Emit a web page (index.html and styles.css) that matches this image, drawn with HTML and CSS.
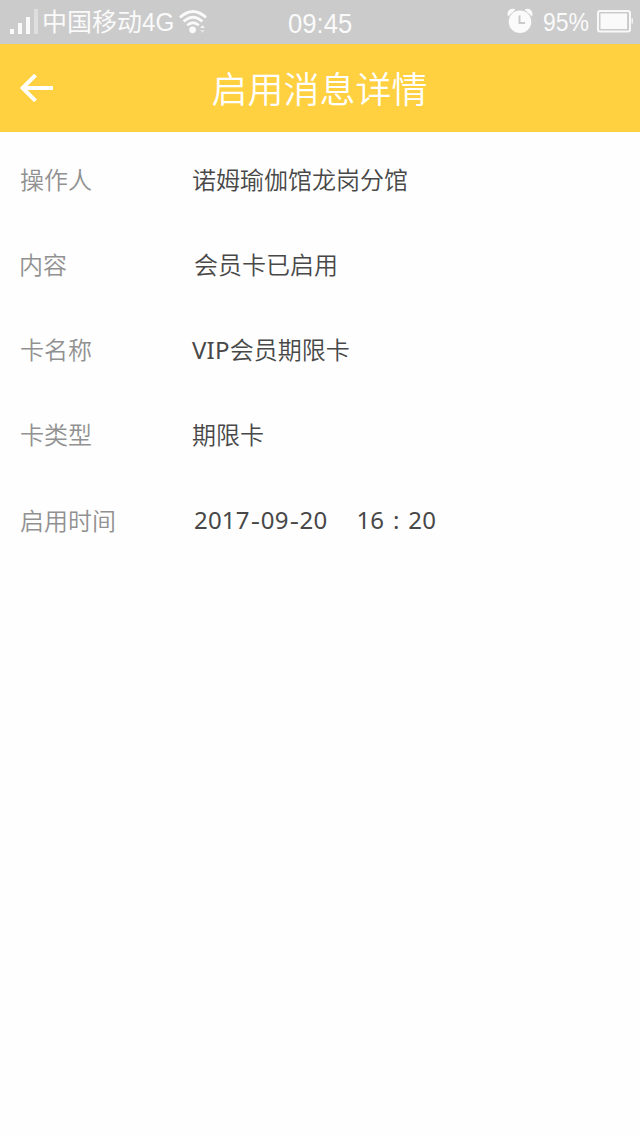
FILE: index.html
```html
<!DOCTYPE html>
<html lang="zh-CN">
<head>
<meta charset="utf-8">
<title>启用消息详情</title>
<link rel="stylesheet" href="styles.css">
</head>
<body>
<div class="status">
  <svg class="signal" width="30" height="26" viewBox="0 0 30 26"><path d="M0 20h4v5H0zM8 14h4v11H8zM16 8h4v17h-4z" fill="#fafafa"/><path d="M24 0h4v25h-4z" fill="#dedede"/></svg>
  <span class="carrier">中国移动</span><span class="net">4G</span>
  <svg class="wifi" width="28" height="24" viewBox="0 0 28 24"><g fill="none" stroke="#fafafa" stroke-width="2.8"><path d="M1 7.5Q14-4.5 27 7.5"/><path d="M4.6 11.5Q14 3 23.4 11.5"/><path d="M8.2 15.3Q14 10.3 19.8 15.3"/></g><circle cx="13.6" cy="19.8" r="3.4" fill="#fafafa"/><path d="M21.2 18l2.3-3 2.3 3z" fill="#f4f4f4"/><path d="M21.2 20l2.3 3 2.3-3z" fill="#e4e4e4"/></svg>
  <span class="clock">09:45</span>
  <svg class="alarm" width="26" height="26" viewBox="0 0 26 26"><path d="M1 8.5C-1 3 4-.8 8.5 1.5zM25 8.5C27 3 22-.8 17.5 1.5z" fill="#fafafa"/><circle cx="13" cy="13.7" r="11.3" fill="#fafafa"/><path d="M12.5 7.5v7.5h5.5" fill="none" stroke="#c9c9c9" stroke-width="2"/></svg>
  <span class="percent">95%</span>
  <svg class="battery" width="37" height="23" viewBox="0 0 37 23"><rect x="1" y="1" width="32" height="20.5" rx="2" fill="#cbcbcb" stroke="#f8f8f8" stroke-width="2"/><path d="M3.5 3.5h26.5v15.5H3.5z" fill="#fafafa"/><path d="M34.5 8.5h1.5v5h-1.5z" fill="#f4f4f4"/></svg>
</div>
<header class="header">
  <svg class="back" width="34" height="30" viewBox="0 0 34 30"><path d="M33 15H4M15.5 2.2L2.7 15l12.8 12.8" fill="none" stroke="#fff" stroke-width="4"/></svg>
  <h1 class="title">启用消息详情</h1>
</header>
<dl class="details">
  <div class="row"><dt class="label">操作人</dt><dd class="value">诺姆瑜伽馆龙岗分馆</dd></div>
  <div class="row"><dt class="label shift-left">内容</dt><dd class="value indent">会员卡已启用</dd></div>
  <div class="row"><dt class="label">卡名称</dt><dd class="value"><span class="latin">VIP</span>会员期限卡</dd></div>
  <div class="row"><dt class="label">卡类型</dt><dd class="value">期限卡</dd></div>
  <div class="row"><dt class="label low">启用时间</dt><dd class="value indent latin">2017<span class="dash">-</span>09<span class="dash">-</span>20<span class="time">16<span class="colon">:</span>20</span></dd></div>
</dl>
</body>
</html>
```
FILE: styles.css
```css
* { box-sizing: border-box; margin: 0; padding: 0; }
body {
  min-height: 1136px;
  background: #fefefe;
  font-family: "Noto Sans", "Noto Sans CJK SC", sans-serif;
}
svg { display: block; flex: none; }
.status {
  display: flex;
  height: 44px;
  padding-left: 10px;
  background: #cbcbcb;
  color: #fafafa;
  font-family: "Liberation Sans", "Noto Sans CJK SC", sans-serif;
  line-height: 44px;
  white-space: nowrap;
}
.signal { margin-top: 9px; }
.carrier { width: 101px; margin-left: 2px; font-size: 25px; }
.net { width: 32px; margin-left: -1px; font-size: 26px; transform: scaleX(.93); transform-origin: left; }
.wifi { margin: 10px 0 0 5px; }
.clock { width: 64px; margin-left: 81px; padding-top: 2px; font-size: 27px; transform: scaleX(.95); transform-origin: left; }
.alarm { margin: 8px 0 0 155px; }
.percent { width: 46px; margin-left: 10px; font-size: 25px; transform: scaleX(.92); transform-origin: left; }
.battery { margin: 10px 0 0 8px; }
.header {
  display: grid;
  grid-template-columns: 34px 1fr 34px;
  align-items: center;
  height: 88px;
  padding: 0 20px;
  background: #ffd03f;
}
.title { padding-top: 3px; color: #fff; font-size: 36px; font-weight: 350; line-height: 85px; text-align: center; text-indent: -1px; }
.details { padding-top: 5px; }
.row { display: flex; height: 85px; padding-left: 20px; font-size: 24px; line-height: 85px; }
.label { width: 172px; color: #919191; font-weight: 350; }
.shift-left { text-indent: -1px; }
.low { padding-top: 1px; }
.value { color: #484848; font-weight: 350; }
.latin { font-weight: 400; letter-spacing: .2px; }
.indent { padding-left: 2px; }
.dash { display: inline-block; width: 11px; text-align: center; transform: scaleX(1.2); }
.time { margin-left: 29px; }
.colon { display: inline-block; width: 24px; text-align: center; }
```
